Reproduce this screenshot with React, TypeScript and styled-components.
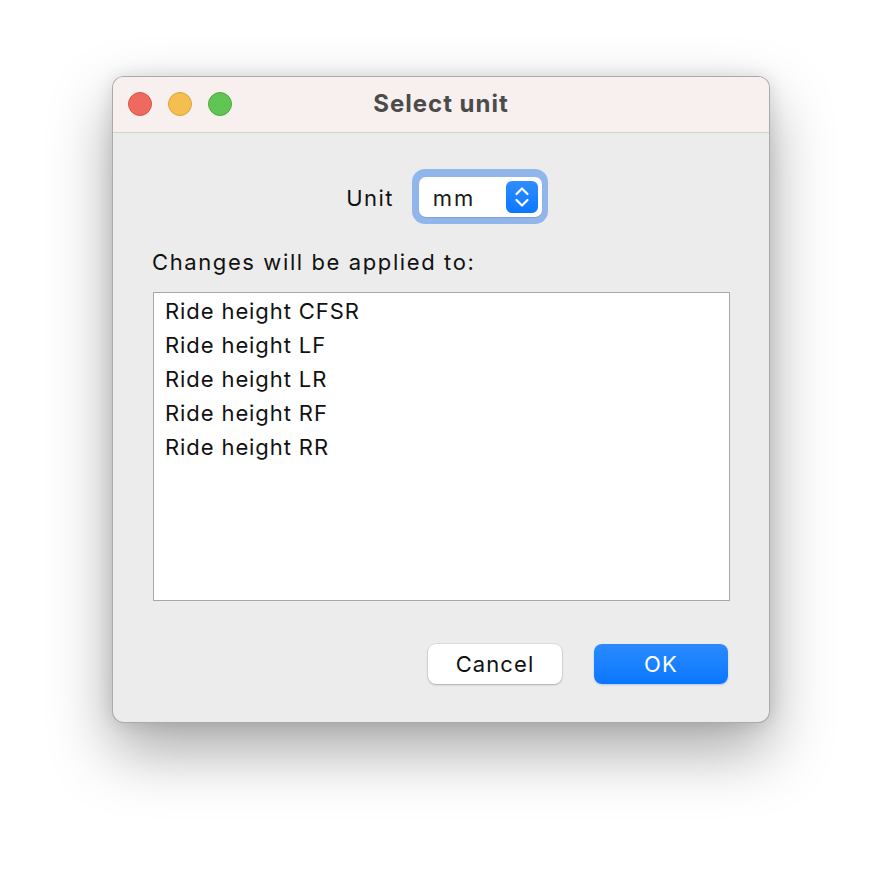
import styled, { createGlobalStyle } from 'styled-components';

const GlobalStyle = createGlobalStyle`
  * {
    box-sizing: border-box;
  }
  body {
    margin: 0;
    background: #ffffff;
    font-family: Inter, 'Liberation Sans', sans-serif;
  }
`;

const Desktop = styled.div`
  width: 882px;
  height: 870px;
  padding: 76px 0 0 112px;
  background: #ffffff;
`;

const Window = styled.div`
  width: 658px;
  border-radius: 12px;
  border: 1px solid rgba(0, 0, 0, 0.28);
  background: #ececec;
  overflow: hidden;
  box-shadow: 0 28px 62px rgba(0, 0, 0, 0.34), 0 0 18px rgba(0, 0, 0, 0.12);
`;

const TitleBar = styled.div`
  position: relative;
  height: 56px;
  display: flex;
  align-items: center;
  justify-content: center;
  background: #f8f0ee;
  border-bottom: 1px solid #d6cfcd;
`;

const Lights = styled.div`
  position: absolute;
  left: 15px;
  top: 15px;
  display: flex;
  gap: 16px;
`;

const Light = styled.span<{ $fill: string; $edge: string }>`
  width: 24px;
  height: 24px;
  border-radius: 50%;
  background: ${(p) => p.$fill};
  border: 1px solid ${(p) => p.$edge};
`;

const Title = styled.h1`
  margin: 0 0 2px;
  font-size: 24px;
  font-weight: 700;
  color: #4b4b4b;
  letter-spacing: 1px;
`;

const Content = styled.div`
  padding: 36px 41px 38px 39px;
  display: flex;
  flex-direction: column;
  font-size: 22px;
  letter-spacing: 0.9px;
  color: #111111;
`;

const UnitRow = styled.div`
  display: flex;
  align-items: center;
  justify-content: center;
  gap: 18px;
  padding-left: 14px;
  height: 55px;
`;

const FieldLabel = styled.label`
  padding-top: 2px;
  letter-spacing: 1.4px;
`;

const FocusRing = styled.div`
  width: 136px;
  height: 55px;
  padding: 8px 6px 7px 7px;
  border-radius: 13px;
  background: #91b6eb;
`;

const PopUp = styled.div`
  height: 40px;
  border-radius: 7px;
  background: #ffffff;
  display: flex;
  align-items: center;
  justify-content: space-between;
  padding: 0 4px 0 14px;
  box-shadow: 0 1px 1px rgba(0, 0, 0, 0.12);
`;

const PopUpValue = styled.span`
  color: #1a1a1a;
  padding-top: 2px;
  letter-spacing: 2px;
`;

const Stepper = styled.span`
  width: 32px;
  height: 32px;
  border-radius: 6px;
  background: linear-gradient(#2f8dff, #0a78fe);
  display: flex;
  align-items: center;
  justify-content: center;
`;

const SectionLabel = styled.div`
  margin-top: 26px;
  line-height: 24px;
  letter-spacing: 1.6px;
`;

const ListBox = styled.ul`
  margin: 18px 0 0 1px;
  padding: 1px 0 0;
  list-style: none;
  height: 309px;
  width: 577px;
  background: #ffffff;
  border: 1px solid #a8a8a8;
`;

const ListItem = styled.li`
  height: 34px;
  line-height: 34px;
  padding-left: 11px;
`;

const ButtonRow = styled.div`
  margin-top: 43px;
  display: flex;
  justify-content: flex-end;
  gap: 32px;
`;

const Button = styled.button<{ $primary?: boolean }>`
  width: 134px;
  height: 40px;
  border-radius: 8px;
  border: none;
  font-family: inherit;
  font-size: 22px;
  letter-spacing: 1.1px;
  color: ${(p) => (p.$primary ? '#ffffff' : '#111111')};
  background: ${(p) => (p.$primary ? 'linear-gradient(#2a8aff, #0a77fe)' : '#ffffff')};
  box-shadow: ${(p) =>
    p.$primary
      ? '0 1px 2px rgba(0, 90, 220, 0.25)'
      : '0 0 0 0.5px rgba(0, 0, 0, 0.12), 0 1px 2px rgba(0, 0, 0, 0.22)'};
`;

const items = ['Ride height CFSR', 'Ride height LF', 'Ride height LR', 'Ride height RF', 'Ride height RR'];

const App: React.FC = () => {
  return (
    <>
      <GlobalStyle />
      <Desktop>
        <Window>
          <TitleBar>
            <Lights>
              <Light $fill="#ee6a5e" $edge="#d55548" />
              <Light $fill="#f5bf4f" $edge="#d9a33e" />
              <Light $fill="#61c554" $edge="#4fa940" />
            </Lights>
            <Title>Select unit</Title>
          </TitleBar>
          <Content>
            <UnitRow>
              <FieldLabel>Unit</FieldLabel>
              <FocusRing>
                <PopUp>
                  <PopUpValue>mm</PopUpValue>
                  <Stepper>
                    <svg width="18" height="26" viewBox="0 0 18 26" fill="none">
                      <path d="M3.5 10 L9 4.5 L14.5 10" stroke="#fff" strokeWidth="2.2" strokeLinecap="round" strokeLinejoin="round" />
                      <path d="M3.5 16 L9 21.5 L14.5 16" stroke="#fff" strokeWidth="2.2" strokeLinecap="round" strokeLinejoin="round" />
                    </svg>
                  </Stepper>
                </PopUp>
              </FocusRing>
            </UnitRow>
            <SectionLabel>Changes will be applied to:</SectionLabel>
            <ListBox>
              {items.map((item) => (
                <ListItem key={item}>{item}</ListItem>
              ))}
            </ListBox>
            <ButtonRow>
              <Button>Cancel</Button>
              <Button $primary>OK</Button>
            </ButtonRow>
          </Content>
        </Window>
      </Desktop>
    </>
  );
};

export default App;
